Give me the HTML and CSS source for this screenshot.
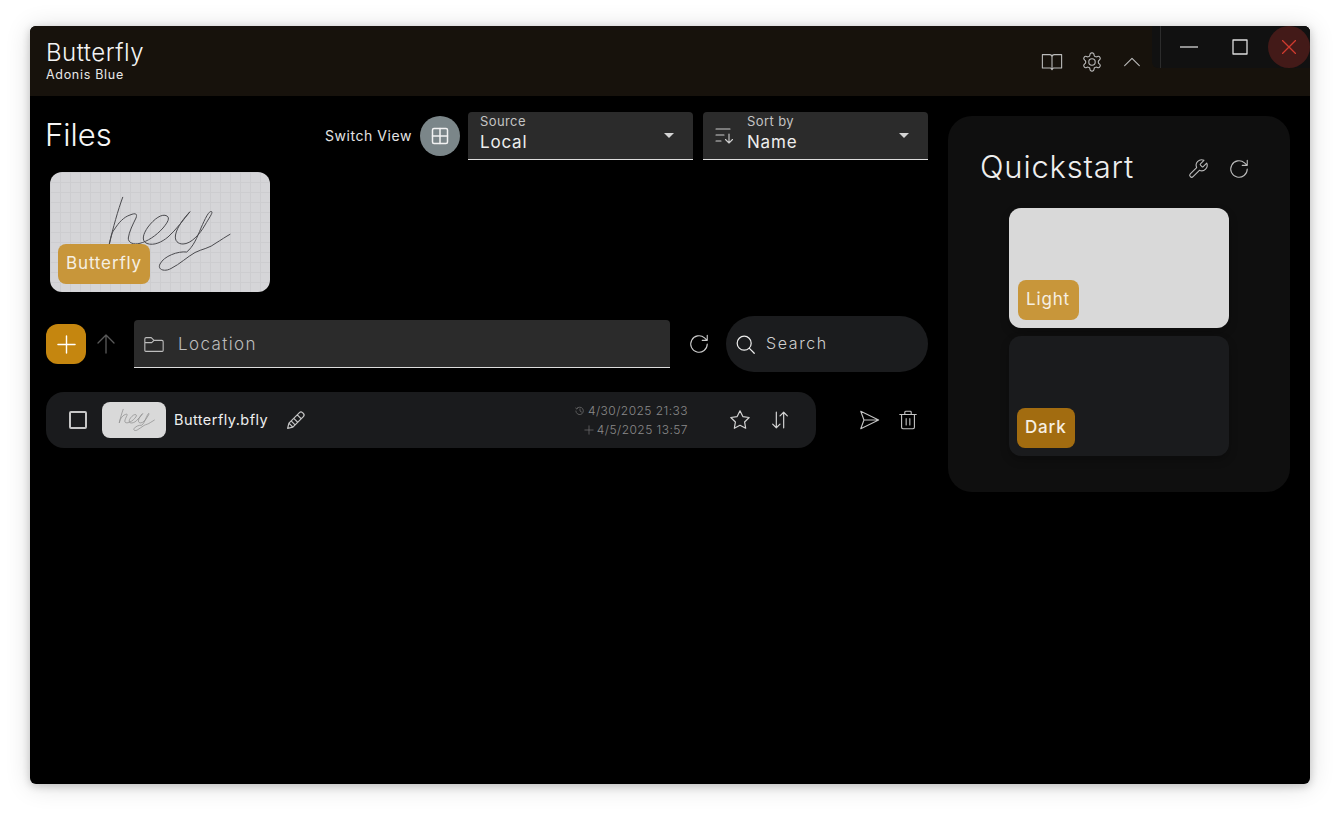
FILE: index.html
```html
<!DOCTYPE html>
<html lang="en">
<head>
    <meta charset="UTF-8">
    <meta name="viewport" content="width=device-width, initial-scale=1.0">
    <title>Butterfly</title>
    <link rel="stylesheet" href="styles.css">
</head>
<body>
    <div class="window">
        <header class="titlebar">
            <div class="brand">
                <div class="brand-name">Butterfly</div>
                <div class="brand-sub">Adonis Blue</div>
            </div>
            <div class="title-actions">
                <svg class="icon" viewBox="0 0 24 24"><path d="M1.500 4h8a2.500 2.500 0 0 1 2.500 2.500V20M22.500 4h-8A2.500 2.500 0 0 0 12 6.500M1.500 4v14.500h9L12 20.500l1.500-2h9V4"/></svg>
                <svg class="icon" viewBox="0 0 24 24"><path d="M12.220 2h-.44a2 2 0 0 0-2 2v.18a2 2 0 0 1-1 1.730l-.43.25a2 2 0 0 1-2 0l-.15-.08a2 2 0 0 0-2.730.73l-.22.38a2 2 0 0 0 .73 2.730l.15.1a2 2 0 0 1 1 1.720v.51a2 2 0 0 1-1 1.740l-.15.09a2 2 0 0 0-.73 2.730l.22.38a2 2 0 0 0 2.730.73l.15-.08a2 2 0 0 1 2 0l.43.25a2 2 0 0 1 1 1.730V20a2 2 0 0 0 2 2h.44a2 2 0 0 0 2-2v-.18a2 2 0 0 1 1-1.730l.43-.25a2 2 0 0 1 2 0l.15.08a2 2 0 0 0 2.730-.73l.22-.39a2 2 0 0 0-.73-2.730l-.15-.08a2 2 0 0 1-1-1.740v-.5a2 2 0 0 1 1-1.740l.15-.09a2 2 0 0 0 .73-2.730l-.22-.38a2 2 0 0 0-2.730-.73l-.15.08a2 2 0 0 1-2 0l-.43-.25a2 2 0 0 1-1-1.730V4a2 2 0 0 0-2-2z"/><circle cx="12" cy="12" r="3.500"/></svg>
                <svg class="icon" viewBox="0 0 24 24"><path d="M4 16l8-8 8 8"/></svg>
            </div>
            <div class="win-controls">
                <div class="win-btn"><svg class="win-icon" viewBox="0 0 18 14"><path d="M0 7h18"/></svg></div>
                <div class="win-btn"><svg class="win-icon" viewBox="0 0 16 16"><rect x="1" y="1" width="14" height="14"/></svg></div>
                <div class="win-close"><svg class="win-icon" viewBox="0 0 14 14"><path d="M0 0l14 14M14 0L0 14"/></svg></div>
            </div>
        </header>

        <div class="content">
            <main class="files">
                <div class="files-head">
                    <h1 class="files-title">Files</h1>
                    <span class="switch-label">Switch View</span>
                    <div class="switch-btn">
                        <svg class="icon-sm" viewBox="0 0 18 18"><rect x="1.500" y="1.500" width="15" height="15" rx="1.500"/><path d="M9 1.500v15M1.500 9h15"/></svg>
                    </div>
                    <div class="select">
                        <div class="select-text">
                            <span class="select-label">Source</span>
                            <span class="select-value">Local</span>
                        </div>
                        <span class="caret"></span>
                    </div>
                    <div class="select">
                        <svg class="select-icon" viewBox="0 0 20 20"><path d="M1 3h14M1 9h8M1 15h5M14 8v9M10.500 13.500L14 17l3.500-3.500"/></svg>
                        <div class="select-text">
                            <span class="select-label">Sort by</span>
                            <span class="select-value">Name</span>
                        </div>
                        <span class="caret"></span>
                    </div>
                </div>

                <div class="card card-file">
                    <svg class="scribble" viewBox="0 0 220 120"><path d="M72.700 25.300C68 38 63 56 59.300 72C61 65 62 60 64 58C69 50 74 45 80 43C86 40.500 87.500 42 86 46C83 52 79 60 78.300 66C78 71 84 73 90 71.300C97 69.500 106 64 113 56C118 50 120 46 117 44C112 41 104 47 98 55C93 62 91 69 97 71.500C104 74 112 70 118 65C126 58 134 47 140 39.700C134 46 127 55 125.500 63C124.500 69 128 72 133 72C141 72 150 62 155 53C159 46 163 41 161.700 39.700C159 38 155 47 151 56C147 66 143 75 136.700 80C128 79 114 84 110 92C107 98 115 100 121 96.500C130 92 137 85 145 80.500C152 77 160 76 166 71C171 68 176 64.500 180 62.300"/></svg>
                    <span class="badge badge-file">Butterfly</span>
                </div>

                <div class="path-row">
                    <div class="add-btn"><svg class="icon-add" viewBox="0 0 20 20"><path d="M10 1v18M1 10h18"/></svg></div>
                    <svg class="icon up-arrow" viewBox="0 0 24 24"><path d="M12 21V3M4 11l8-8 8 8"/></svg>
                    <div class="location">
                        <svg class="icon" viewBox="0 0 24 24"><path d="M2 19V6.500A1.500 1.500 0 0 1 3.500 5h5.500l3 3h8.500A1.500 1.500 0 0 1 22 9.500V19a1 1 0 0 1-1 1H3a1 1 0 0 1-1-1zM2 10.500h7.500L12 8"/></svg>
                        <span class="location-text">Location</span>
                    </div>
                    <svg class="icon refresh" viewBox="0 0 24 24"><path d="M21 12a9 9 0 1 1-3-6.700L21 8M21 2.500V8h-5.500"/></svg>
                    <div class="search">
                        <svg class="icon search-icon" viewBox="0 0 24 24"><circle cx="10.500" cy="10.500" r="8"/><path d="M16.500 16.500L22 22"/></svg>
                        <span class="search-text">Search</span>
                    </div>
                </div>

                <div class="file-line">
                    <div class="file-row">
                        <span class="checkbox"></span>
                        <div class="thumb">
                            <svg class="scribble scribble-faint" viewBox="0 0 220 124"><path d="M72.700 25.300C68 38 63 56 59.300 72C61 65 62 60 64 58C69 50 74 45 80 43C86 40.500 87.500 42 86 46C83 52 79 60 78.300 66C78 71 84 73 90 71.300C97 69.500 106 64 113 56C118 50 120 46 117 44C112 41 104 47 98 55C93 62 91 69 97 71.500C104 74 112 70 118 65C126 58 134 47 140 39.700C134 46 127 55 125.500 63C124.500 69 128 72 133 72C141 72 150 62 155 53C159 46 163 41 161.700 39.700C159 38 155 47 151 56C147 66 143 75 136.700 80C128 79 114 84 110 92C107 98 115 100 121 96.500C130 92 137 85 145 80.500C152 77 160 76 166 71C171 68 176 64.500 180 62.300"/></svg>
                        </div>
                        <span class="file-name">Butterfly.bfly</span>
                        <svg class="icon pencil" viewBox="0 0 24 24"><path d="M3 21l1.500-6L16.500 3a2.500 2.500 0 0 1 3.500 0l1 1a2.500 2.500 0 0 1 0 3.500L9 19.500zM14 5.500L18.500 10M4.500 15L9 19.500M7 12.500l4.500 4.500M10 9.500l4.500 4.500"/></svg>
                        <div class="file-dates">
                            <div class="date-line">
                                <svg class="date-icon" viewBox="0 0 12 12"><path d="M2 3a4.500 4.500 0 1 1-1 3M.800 2.500L2 3.500l1.200-.8M6 3.500V6l1.800 1.200"/></svg>
                                4/30/2025 21:33
                            </div>
                            <div class="date-line">
                                <svg class="date-icon" viewBox="0 0 12 12"><path d="M6 1v10M1 6h10"/></svg>
                                4/5/2025 13:57
                            </div>
                        </div>
                        <svg class="icon star" viewBox="0 0 24 24"><polygon points="12 2 15.090 8.260 22 9.270 17 14.140 18.180 21.020 12 17.770 5.820 21.020 7 14.140 2 9.270 8.910 8.260 12 2"/></svg>
                        <svg class="icon swap" viewBox="0 0 24 24"><path d="M8 3.500v17M4 16.500l4 4 4-4M16 20.500v-17M12 7.500l4-4 4 4"/></svg>
                    </div>
                    <svg class="icon send" viewBox="0 0 24 24"><path d="M3 2.500L22.500 12 3 21.500 6.500 12zM6.500 12h16"/></svg>
                    <svg class="icon trash" viewBox="0 0 24 24"><path d="M3 6h18M8.500 6V3.500A1 1 0 0 1 9.500 2.500h5a1 1 0 0 1 1 1V6M5 6v14a1.500 1.500 0 0 0 1.500 1.500h11A1.500 1.500 0 0 0 19 20V6M10 10.500v7M14 10.500v7"/></svg>
                </div>
            </main>

            <aside class="quickstart">
                <div class="quick-head">
                    <h2 class="quick-title">Quickstart</h2>
                    <svg class="icon wrench" viewBox="0 0 24 24"><path d="M14.700 6.300a1 1 0 0 0 0 1.400l1.600 1.600a1 1 0 0 0 1.400 0l3.770-3.770a6 6 0 0 1-7.940 7.940l-6.910 6.910a2.120 2.120 0 0 1-3-3l6.910-6.910a6 6 0 0 1 7.940-7.940l-3.760 3.760z"/></svg>
                    <svg class="icon quick-refresh" viewBox="0 0 24 24"><path d="M21 12a9 9 0 1 1-3-6.700L21 8M21 2.500V8h-5.500"/></svg>
                </div>
                <div class="quick-cards">
                    <div class="card card-light"><span class="badge badge-light">Light</span></div>
                    <div class="card card-dark"><span class="badge badge-dark">Dark</span></div>
                </div>
            </aside>
        </div>
    </div>
</body>
</html>
```

FILE: styles.css
```css
* {
    box-sizing: border-box;
}

html, body {
    height: 100%;
}

body {
    margin: 0;
    padding: 26px 30px 34px;
    background-color: #ffffff;
    color: #eeeeee;
    font-family: Inter, "Noto Sans", sans-serif;
    overflow: hidden;
}

svg {
    display: block;
    flex: none;
    fill: none;
    stroke: currentColor;
    stroke-linecap: round;
    stroke-linejoin: round;
}

.window {
    height: 758px;
    background-color: #000000;
    border-radius: 6px;
    overflow: hidden;
    box-shadow: 0 2px 8px rgba(0, 0, 0, 0.2), 0 2px 26px rgba(0, 0, 0, 0.14);
}

/* title bar */
.titlebar {
    display: flex;
    height: 70px;
    background-color: #17120c;
}

.brand {
    padding: 13px 0 0 16px;
    flex: 1;
}

.brand-name {
    font-size: 24px;
    font-weight: 300;
    line-height: 27px;
    letter-spacing: 0.5px;
    color: #f4f4f4;
}

.brand-sub {
    margin-top: 1px;
    font-size: 12.500px;
    line-height: 15px;
    letter-spacing: 0.7px;
    color: #e8e8e8;
}

.title-actions {
    display: flex;
    align-items: center;
    gap: 18px;
    padding: 2px 0 0;
    margin-right: 9px;
    color: #bbbbbb;
}

.icon {
    width: 22px;
    height: 22px;
    stroke-width: 1.200;
}

.win-controls {
    display: flex;
    align-items: center;
    width: 158px;
    height: 42px;
    padding-left: 8px;
    background-color: #111111;
    border-bottom-left-radius: 6px;
}

.win-btn {
    display: flex;
    align-items: center;
    justify-content: center;
    width: 45px;
    height: 42px;
    color: #dddddd;
}

.win-btn:first-child {
    border-left: 1px solid #2c2c2c;
    width: 57px;
    color: #bbbbbb;
}

.win-btn:first-child .win-icon {
    width: 18px;
}

.win-icon {
    width: 16px;
    height: 16px;
    stroke-width: 1.300;
}

.win-close {
    display: flex;
    align-items: center;
    justify-content: center;
    width: 42px;
    height: 42px;
    margin-left: 6px;
    border-radius: 50%;
    background-color: #431a18;
    color: #d03a2e;
}

.win-close .win-icon {
    width: 14px;
    height: 14px;
}

/* main area */
.content {
    display: flex;
    align-items: flex-start;
    gap: 20px;
    padding: 16px 20px 0 16px;
}

.files {
    width: 882px;
}

.files-head {
    display: flex;
    align-items: center;
    height: 48px;
}

.files-title {
    flex: 1;
    margin: 0 0 4px -1px;
    font-size: 31px;
    font-weight: 300;
    color: #f6f6f6;
}

.switch-label {
    margin: 0 8px 2px 0;
    font-size: 14px;
    letter-spacing: 0.55px;
    color: #e4e4e4;
}

.switch-btn {
    display: flex;
    align-items: center;
    justify-content: center;
    width: 40px;
    height: 40px;
    margin-right: 8px;
    border-radius: 50%;
    background-color: #7b8689;
    background-image: radial-gradient(#8f9b9e 0.5px, transparent 0.7px);
    background-size: 4px 4px;
    color: #f2f2f2;
}

.icon-sm {
    width: 18px;
    height: 18px;
    stroke-width: 1.500;
}

.select {
    display: flex;
    align-items: center;
    width: 225px;
    height: 48px;
    padding: 0 16px 0 12px;
    background-color: #2b2b2b;
    border-bottom: 1px solid #dddddd;
    border-radius: 4px 4px 0 0;
}

.select + .select {
    margin-left: 10px;
}

.select-icon {
    width: 20px;
    height: 20px;
    margin-right: 12px;
    stroke-width: 1.100;
    color: #cccccc;
}

.select-text {
    display: flex;
    flex: 1;
    flex-direction: column;
}

.select-label {
    font-size: 13px;
    line-height: 15px;
    letter-spacing: 0.4px;
    margin-top: -2px;
    color: #c4c4c4;
}

.select-value {
    font-size: 17px;
    line-height: 26px;
    letter-spacing: 0.8px;
    font-weight: 400;
    color: #eeeeee;
}

.caret {
    width: 0;
    height: 0;
    margin: 0 3px 0 0;
    border-left: 5px solid transparent;
    border-right: 5px solid transparent;
    border-top: 5px solid #d4d4d4;
}

/* cards */
.card {
    position: relative;
    width: 220px;
    height: 120px;
    border-radius: 12px;
}

.card-file {
    margin: 12px 0 0 4px;
    background-color: #d5d5d8;
    background-image: linear-gradient(#cdcdd0 1px, transparent 1px), linear-gradient(90deg, #cdcdd0 1px, transparent 1px);
    background-size: 10px 10px;
}

.scribble {
    width: 100%;
    height: 100%;
    stroke: #4a4a4e;
    stroke-width: 1;
}

.scribble-faint {
    stroke: #8c8c8c;
    stroke-width: 2.500;
}

.badge {
    position: absolute;
    left: 8px;
    bottom: 8px;
    height: 40px;
    padding: 0 8px;
    border-radius: 8px;
    font-size: 17px;
    line-height: 39px;
    letter-spacing: 0.85px;
    color: #f6efe2;
}

.badge-file {
    width: 92px;
    background-color: #c8963a;
}

/* path row */
.path-row {
    display: flex;
    align-items: center;
    height: 56px;
    margin-top: 24px;
}

.add-btn {
    display: flex;
    align-items: center;
    justify-content: center;
    width: 40px;
    height: 40px;
    border-radius: 12px;
    background-color: #c5860f;
    color: #ffffff;
}

.icon-add {
    width: 19px;
    height: 19px;
    stroke-width: 1.500;
}

.up-arrow {
    width: 24px;
    height: 24px;
    margin: 0 16px 0 8px;
    color: #5a5a5a;
    stroke-width: 1.300;
}

.location {
    display: flex;
    align-items: center;
    width: 536px;
    height: 48px;
    padding-left: 9px;
    background-color: #2b2b2b;
    border-bottom: 1px solid #dddddd;
    border-radius: 4px 4px 0 0;
    color: #bdbdbd;
}

.location-text {
    margin-left: 13px;
    font-size: 17px;
    letter-spacing: 1.400px;
    font-weight: 300;
}

.refresh {
    margin: 0 16px 0 18px;
    color: #cccccc;
}

.search {
    display: flex;
    align-items: center;
    width: 202px;
    height: 56px;
    padding-left: 9px;
    border-radius: 28px;
    background-color: #1b1c1e;
    background-image: radial-gradient(#2a2b2d 0.5px, transparent 0.7px);
    background-size: 2px 2px;
    color: #cfcfcf;
}

.search-icon {
    width: 21px;
    height: 21px;
    color: #eeeeee;
    stroke-width: 1.400;
}

.search-text {
    margin: -2px 0 0 10px;
    font-size: 16px;
    letter-spacing: 1.600px;
    font-weight: 300;
}

/* file row */
.file-line {
    display: flex;
    align-items: center;
    margin-top: 20px;
}

.file-row {
    display: flex;
    align-items: center;
    width: 770px;
    height: 56px;
    padding-left: 23px;
    border-radius: 18px;
    background-color: #1a1b1d;
}

.checkbox {
    flex: none;
    width: 18px;
    height: 18px;
    border: 2px solid #c6c6c6;
    border-radius: 2px;
}

.thumb {
    flex: none;
    width: 64px;
    height: 36px;
    margin-left: 15px;
    border-radius: 8px;
    background-color: #d9d9d9;
}

.file-name {
    margin: -1px 0 0 8px;
    font-size: 14.500px;
    letter-spacing: 0.45px;
    color: #eeeeee;
}

.pencil {
    width: 21px;
    height: 21px;
    margin-left: 17px;
    stroke-width: 1.400;
    color: #c4c4c4;
}

.file-dates {
    flex: 1;
    text-align: right;
    font-size: 12px;
    line-height: 19px;
    letter-spacing: 0.45px;
    font-weight: 300;
    color: #8a8a8a;
}

.date-line {
    display: flex;
    align-items: center;
    justify-content: flex-end;
    gap: 3px;
}

.date-icon {
    width: 10px;
    height: 10px;
    stroke-width: 0.900;
    color: #6f6f6f;
}

.star {
    margin-left: 41px;
    stroke-width: 1.300;
    color: #d4d4d4;
}

.swap {
    margin: 0 25px 0 18px;
    stroke-width: 1.300;
    color: #d4d4d4;
}

.send {
    margin-left: 42px;
    color: #c4c4c4;
}

.trash {
    margin-left: 17px;
    color: #c4c4c4;
}

/* quickstart panel */
.quickstart {
    width: 342px;
    height: 376px;
    margin-top: 4px;
    padding: 32px 0 0;
    border-radius: 24px;
    background-color: #0f0f0f;
}

.quick-head {
    display: flex;
    align-items: center;
    height: 36px;
    padding: 0 40px 0 32px;
}

.quick-title {
    flex: 1;
    margin: 0;
    font-size: 31px;
    font-weight: 300;
    letter-spacing: 0.8px;
    color: #eeeeee;
}

.wrench {
    margin-top: 5px;
    color: #bbbbbb;
}

.quick-refresh {
    margin: 5px 0 0 19px;
    color: #bbbbbb;
}

.quick-cards {
    display: flex;
    flex-direction: column;
    gap: 8px;
    width: 220px;
    margin: 24px 0 0 61px;
}

.card-light {
    background-color: #d9d9d9;
    box-shadow: 0 4px 8px rgba(0, 0, 0, 0.25);
}

.card-dark {
    background-color: #1a1b1d;
    box-shadow: 0 4px 8px rgba(0, 0, 0, 0.25);
}

.badge-light {
    left: 9px;
    width: 61px;
    background-color: #c8963a;
}

.badge-dark {
    width: 58px;
    background-color: #a26c10;
    font-weight: 500;
}
```
